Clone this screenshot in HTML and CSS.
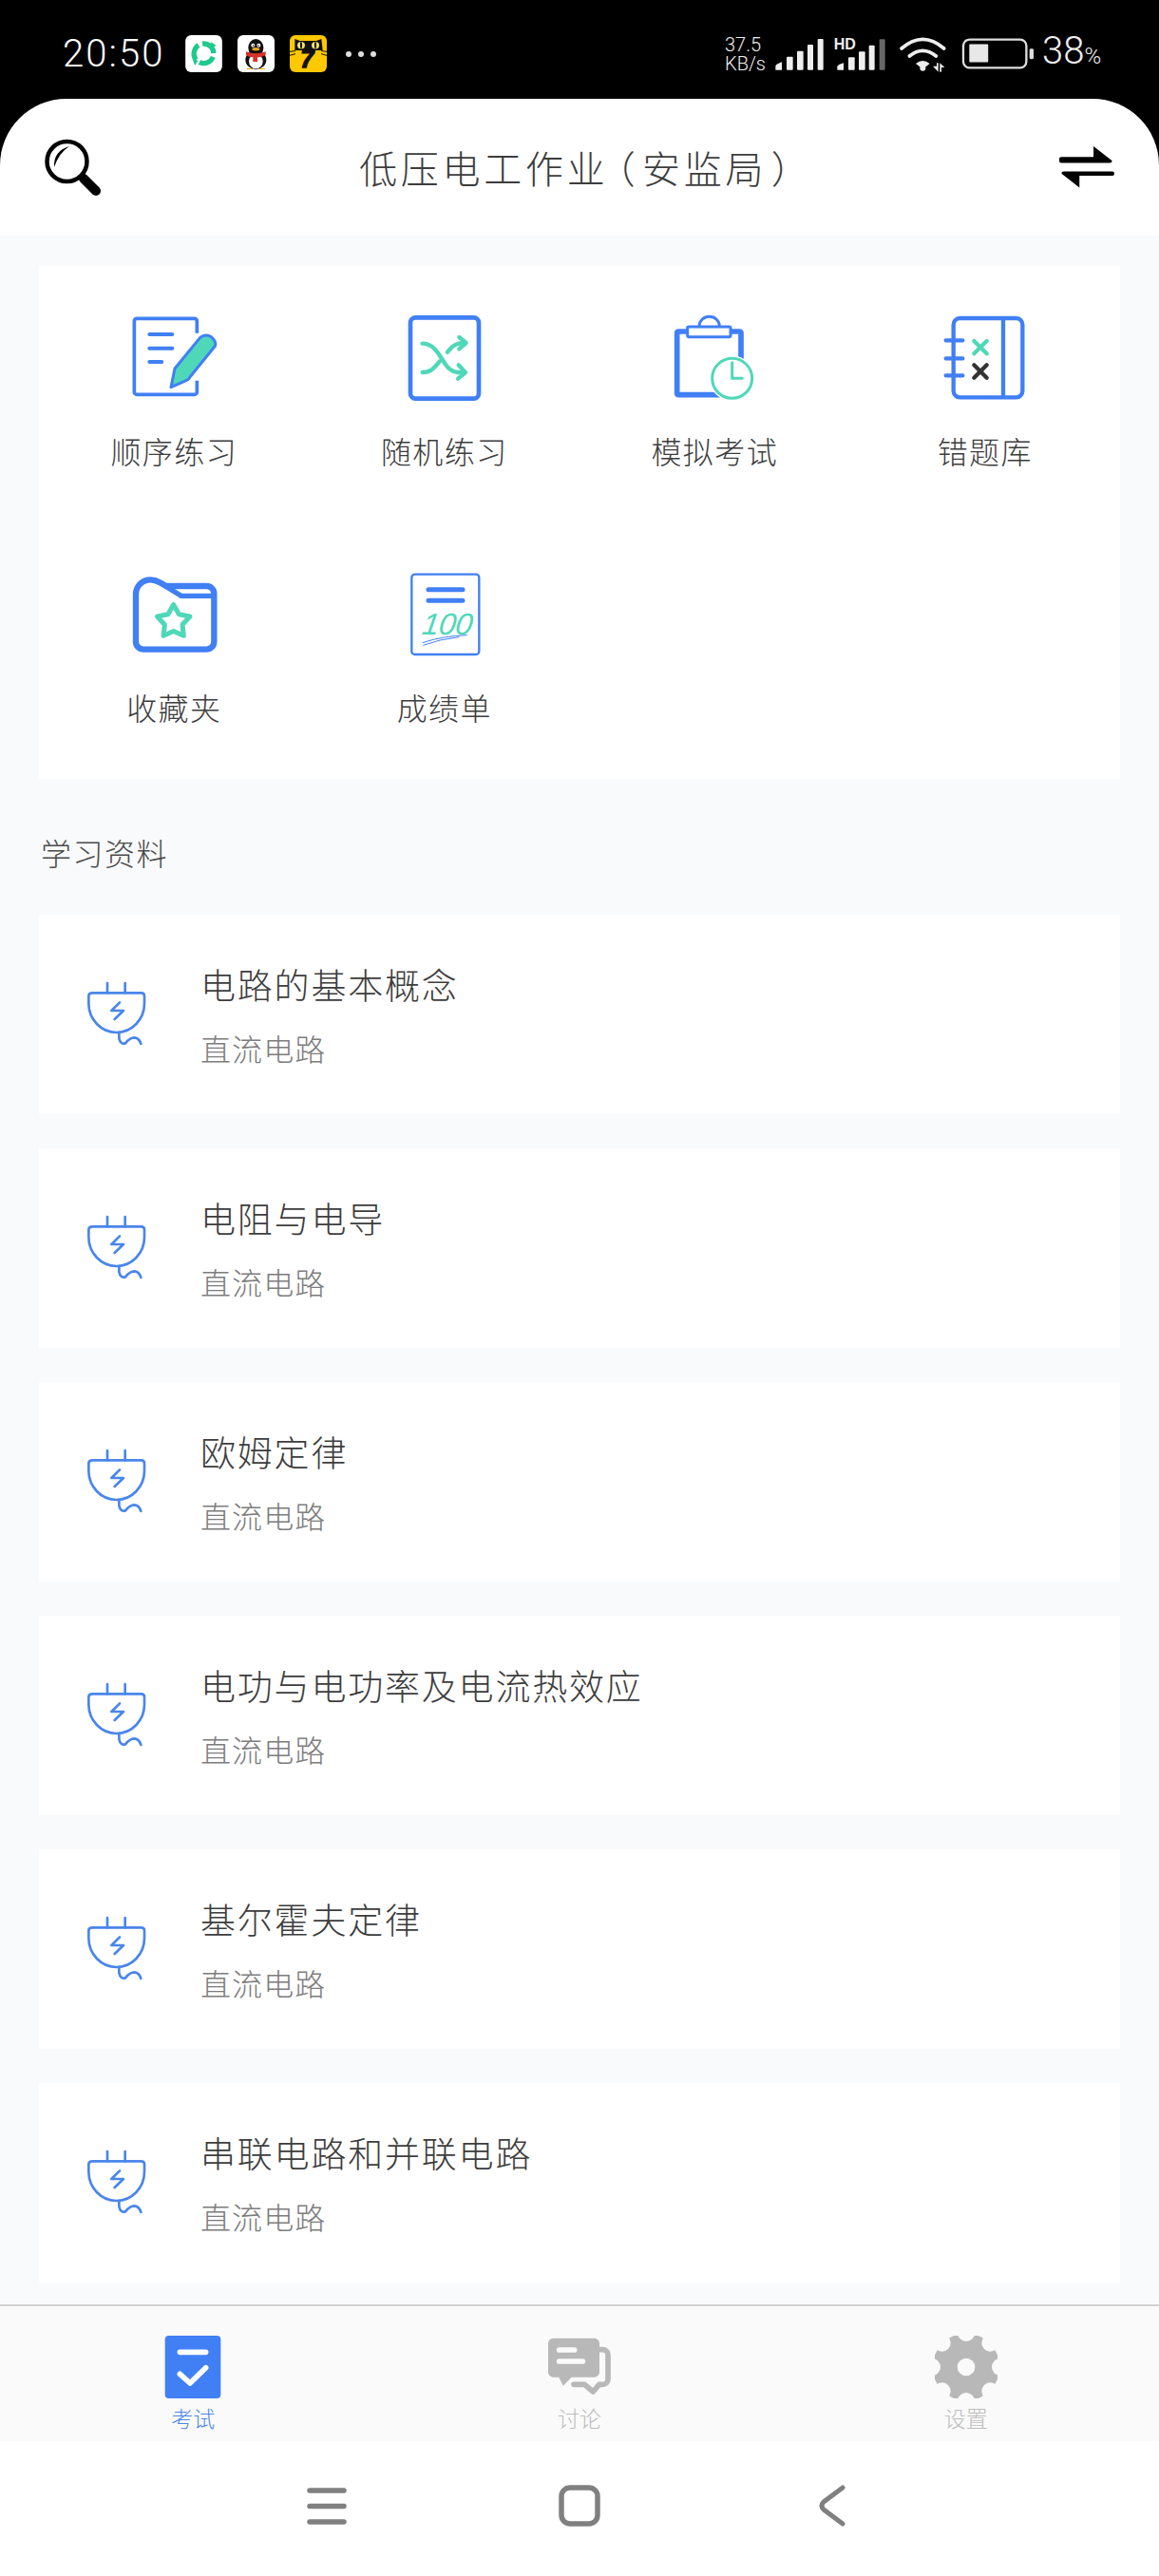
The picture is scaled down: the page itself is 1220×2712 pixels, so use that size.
FILE: index.html
```html
<!DOCTYPE html>
<html lang="zh-CN">
<head>
<meta charset="utf-8">
<title>低压电工作业（安监局）</title>
<link rel="stylesheet" href="styles.css">
</head>
<body>
<div class="phone">
  <div class="status">
    <span class="time">20:50</span>
    <div class="apps">
      <svg class="tile" viewBox="30 20 116 117"><rect x="30" y="20" width="116" height="117" rx="18" fill="#fff"/><circle cx="88" cy="78" r="31" fill="none" stroke="#1ec98c" stroke-width="16" stroke-dasharray="52 13" transform="rotate(20 88 78)"/><path d="M70 100l-18-6 8 22z M112 42l16 12-20 6z" fill="#1ec98c"/></svg>
      <svg class="tile" viewBox="195 20 117 117"><rect x="195" y="20" width="117" height="117" rx="18" fill="#fff"/><ellipse cx="253" cy="60" rx="24" ry="28" fill="#111"/><ellipse cx="253" cy="98" rx="33" ry="30" fill="#111"/><ellipse cx="253" cy="103" rx="22" ry="23" fill="#fff"/><circle cx="244" cy="52" r="6" fill="#fff"/><circle cx="262" cy="52" r="6" fill="#fff"/><circle cx="245" cy="53" r="2.5" fill="#111"/><circle cx="261" cy="53" r="2.5" fill="#111"/><ellipse cx="253" cy="64" rx="12" ry="5" fill="#f2a51e"/><path d="M222 72q31 12 62 0v11q-16 8-26 7v14h-14v-14q-12 0-22-7z" fill="#d8322b"/><path d="M224 125h22l-4 3h-18zM260 125h22v3h-18z" fill="#f2a51e"/></svg>
      <svg class="tile" viewBox="360 20 117 117"><rect x="360" y="20" width="117" height="117" rx="18" fill="#fdc800"/><path d="M376 32l16 6h52l16-6 4 36h-88z" fill="#111"/><path d="M360 72l18-2M360 84l18-5M477 72l-18-2M477 84l-18-5" stroke="#111" stroke-width="3"/><ellipse cx="396" cy="52" rx="12" ry="11" fill="#f7e26b"/><ellipse cx="441" cy="52" rx="12" ry="11" fill="#f7e26b"/><rect x="393" y="42" width="6" height="19" rx="3" fill="#111"/><rect x="438" y="42" width="6" height="19" rx="3" fill="#111"/><text class="cat-seven" x="394" y="121">7</text></svg>
    </div>
    <svg class="more" viewBox="0 0 32 6"><circle cx="3" cy="3" r="3"/><circle cx="16" cy="3" r="3"/><circle cx="29" cy="3" r="3"/></svg>
    <div class="speed"><span>37.5</span><span>KB/s</span></div>
    <svg class="signals" viewBox="180 20 555 120">
      <g fill="#eee"><path d="M187 130v-12q0-6 20-13v25z"/><rect x="222" y="88" width="20" height="42" rx="3"/><rect x="255" y="70" width="20" height="60" rx="3"/><rect x="288" y="50" width="18" height="80" rx="3"/><rect x="320" y="32" width="18" height="98" rx="3"/>
      <path d="M382 130v-10q0-6 20-12v22z"/><rect x="417" y="90" width="20" height="40" rx="3"/><rect x="450" y="72" width="20" height="58" rx="3"/><rect x="482" y="52" width="18" height="78" rx="3"/></g>
      <rect x="515" y="33" width="18" height="97" rx="3" fill="#666"/>
      <text class="hd" x="371" y="65">HD</text>
      <g fill="none" stroke="#eee" stroke-linecap="round"><path d="M585 62q67-58 134 0" stroke-width="11"/><path d="M610 86q42-34 84 0" stroke-width="11"/></g>
      <path d="M630 110q22-18 44 0l-22 17z" fill="#eee"/><circle cx="652" cy="124" r="9" fill="#eee"/>
      <path d="M684 118h12v-10h5v28zM706 108l15 14h-10v14h-5z" fill="#eee"/>
    </svg>
    <svg class="battery" viewBox="35 25 235 110"><rect x="44" y="35" width="200" height="90" rx="20" fill="none" stroke="#ddd" stroke-width="7"/><rect x="63" y="50" width="60" height="57" rx="3" fill="#e8e8e8"/><rect x="254" y="64" width="13" height="33" rx="4" fill="#ddd"/></svg>
    <span class="percent">38<small>%</small></span>
  </div>

  <header class="appbar">
    <svg class="search" viewBox="0 0 62 62"><circle cx="24.500" cy="25" r="21" fill="none" stroke="#000" stroke-width="4.500"/><path d="M11 31Q10 14 27 9Q16 16 11 31z" fill="#000"/><path d="M42 43L55 56" stroke="#000" stroke-width="10" stroke-linecap="round"/></svg>
    <h1 class="title">低压电工作业<span class="paren paren-open">（</span>安监局<span class="paren paren-close">）</span></h1>
    <svg class="swap" viewBox="350 373 172 130"><path d="M350 411q0-5 6-5h101v-33l58 45q0 7-7 7H356q-6 0-6-7zM522 458q0 7-6 7H413v37l-56-44q0-7 7-7h152q6 0 6 7z" fill="#000"/></svg>
  </header>

  <main class="content">
    <section class="grid-card">
      <a class="cell">
        <svg class="grid-icon" viewBox="69 18 360 360"><path d="M322 122V84a8 8 0 0 0-8-8H132a8 8 0 0 0-8 8V308a8 8 0 0 0 8 8H314a8 8 0 0 0 8-8V272" class="st-blue" stroke-width="11"/><path d="M172 126H244M172 170H244M172 213H211" class="st-blue" stroke-width="12" stroke-linecap="round"/><path d="M332 136Q346 124 364 132Q384 146 380 162L302 258Q298 268 288 272L240 293L252 234z" fill="#4fd8b8" stroke="#417ff5" stroke-width="9" stroke-linejoin="round"/></svg>
        <span class="cell-label">顺序练习</span>
      </a>
      <a class="cell">
        <svg class="grid-icon" viewBox="924 18 360 360"><rect x="996" y="73" width="216" height="256" rx="16" class="st-blue" stroke-width="14"/><g class="st-teal" stroke-width="13" stroke-linecap="round" stroke-linejoin="round"><path d="M1034 155C1075 155 1090 200 1110 225C1125 245 1140 247 1165 247"/><path d="M1148 223L1170 247L1146 266"/><path d="M1034 246C1065 246 1075 226 1088 212"/><path d="M1113 182C1130 158 1145 153 1168 153"/><path d="M1150 135L1172 153L1150 172"/></g></svg>
        <span class="cell-label">随机练习</span>
      </a>
      <a class="cell">
        <svg class="grid-icon" viewBox="157 18 360 360"><rect x="219" y="117" width="202" height="200" rx="4" class="st-blue" stroke-width="17"/><path d="M289 100a32 30 0 0 1 64 0" class="st-blue" stroke-width="9"/><rect x="252" y="102" width="136" height="32" rx="4" fill="#fff" stroke="#417ff5" stroke-width="9"/><circle cx="393" cy="265" r="72" fill="#fff"/><circle cx="393" cy="265" r="63" fill="#fff" stroke="#4fd8b8" stroke-width="9"/><path d="M393 215V265H425" class="st-teal" stroke-width="9" stroke-linecap="round"/></svg>
        <span class="cell-label">模拟考试</span>
      </a>
      <a class="cell">
        <svg class="grid-icon" viewBox="1011 18 360 360"><rect x="1091" y="75" width="218" height="250" rx="20" class="st-blue" stroke-width="13"/><path d="M1248 75V325" class="st-blue" stroke-width="13"/><path d="M1067 145H1120M1067 202H1120M1067 256H1120" class="st-blue" stroke-width="13" stroke-linecap="round"/><path d="M1156 147L1196 187M1196 147L1156 187" class="st-teal" stroke-width="13" stroke-linecap="round"/><path d="M1156 223L1196 263M1196 223L1156 263" fill="none" stroke="#333" stroke-width="13" stroke-linecap="round"/></svg>
        <span class="cell-label">错题库</span>
      </a>
      <a class="cell">
        <svg class="grid-icon" viewBox="69 18 360 360"><path d="M153 311H352a24 24 0 0 0 24-24V135a24 24 0 0 0-24-24H225L205 100Q190 91 175 91a46 46 0 0 0-46 46V287a24 24 0 0 0 24 24z" class="st-blue" stroke-width="19"/><path d="M222 111L272 142H376" class="st-blue" stroke-width="16"/><path d="M248 177L263.300 204L293.600 210.200L272.700 233L276.200 263.800L248 251L219.800 263.800L223.300 233L202.400 210.200L232.700 204z" class="st-teal" stroke-width="13.500" stroke-linejoin="round" transform="translate(248 224) scale(1.13) translate(-248 -225)"/></svg>
        <span class="cell-label">收藏夹</span>
      </a>
      <a class="cell">
        <svg class="grid-icon" viewBox="924 18 360 360"><rect x="1000" y="74" width="213" height="253" rx="10" class="st-blue" stroke-width="7"/><path d="M1053 122H1161M1053 157H1161" class="st-blue" stroke-width="15" stroke-linecap="round"/><text class="hundred" x="1067" y="264" transform="skewX(-8)">100</text><path d="M1034 290Q1100 268 1175 266M1036 298Q1090 278 1150 272" class="st-blue" stroke-width="3"/></svg>
        <span class="cell-label">成绩单</span>
      </a>
    </section>

    <h2 class="section-title">学习资料</h2>

    <ul class="list">
      <li class="item"><svg class="plug" viewBox="210 460 192 210"><use href="#plug-shape"/></svg><div class="item-text"><span class="item-title">电路的基本概念</span><span class="item-sub">直流电路</span></div></li>
      <li class="item"><svg class="plug" viewBox="210 460 192 210"><use href="#plug-shape"/></svg><div class="item-text"><span class="item-title">电阻与电导</span><span class="item-sub">直流电路</span></div></li>
      <li class="item"><svg class="plug" viewBox="210 460 192 210"><use href="#plug-shape"/></svg><div class="item-text"><span class="item-title">欧姆定律</span><span class="item-sub">直流电路</span></div></li>
      <li class="item"><svg class="plug" viewBox="210 460 192 210"><use href="#plug-shape"/></svg><div class="item-text"><span class="item-title">电功与电功率及电流热效应</span><span class="item-sub">直流电路</span></div></li>
      <li class="item"><svg class="plug" viewBox="210 460 192 210"><use href="#plug-shape"/></svg><div class="item-text"><span class="item-title">基尔霍夫定律</span><span class="item-sub">直流电路</span></div></li>
      <li class="item"><svg class="plug" viewBox="210 460 192 210"><use href="#plug-shape"/></svg><div class="item-text"><span class="item-title">串联电路和并联电路</span><span class="item-sub">直流电路</span></div></li>
    </ul>
  </main>

  <nav class="tabbar">
    <a class="tab tab-active">
      <svg class="tab-icon" viewBox="120 177 198 198"><rect x="131" y="177" width="176" height="198" rx="12" fill="#417ff5"/><path d="M178 229H260M178 298L210 327L260 278" fill="none" stroke="#fff" stroke-width="17" stroke-linecap="round" stroke-linejoin="round"/></svg>
      <span class="tab-label">考试</span>
    </a>
    <a class="tab">
      <svg class="tab-icon" viewBox="1341 177 198 198"><path d="M1357 185H1487a16 16 0 0 1 16 16V292a16 16 0 0 1-16 16H1415L1388 335L1375 308H1357a16 16 0 0 1-16-16V201a16 16 0 0 1 16-16z" fill="#b8b8b8"/><path d="M1376 222H1424M1376 258H1450" fill="none" stroke="#fafafa" stroke-width="17" stroke-linecap="round"/><path d="M1503 221H1513a17 17 0 0 1 17 17V314a17 17 0 0 1-17 17H1502L1483 354L1456 331H1422" fill="none" stroke="#b8b8b8" stroke-width="17" stroke-linecap="round" stroke-linejoin="round"/></svg>
      <span class="tab-label">讨论</span>
    </a>
    <a class="tab">
      <svg class="tab-icon" viewBox="999 177 198 198"><circle cx="1098" cy="276" r="106" fill="#b8b8b8"/><g fill="#fafafa"><circle cx="1098" cy="168" r="27"/><circle cx="1098" cy="384" r="27"/><circle cx="990" cy="276" r="27"/><circle cx="1206" cy="276" r="27"/><circle cx="1022" cy="200" r="27"/><circle cx="1174" cy="200" r="27"/><circle cx="1022" cy="352" r="27"/><circle cx="1174" cy="352" r="27"/><circle cx="1098" cy="276" r="28"/></g></svg>
      <span class="tab-label">设置</span>
    </a>
  </nav>

  <footer class="sysnav">
    <svg class="sys-menu" viewBox="0 0 42 39"><path d="M3 3H39M3 19.500H39M3 36H39" fill="none" stroke="#808080" stroke-width="5.500" stroke-linecap="round"/></svg>
    <svg class="sys-home" viewBox="0 0 44 44"><rect x="3" y="3" width="38" height="38" rx="9" fill="none" stroke="#808080" stroke-width="5.500"/></svg>
    <svg class="sys-back" viewBox="0 0 28 44"><path d="M25 3L5 18Q1 22 5 26L25 41" fill="none" stroke="#808080" stroke-width="5" stroke-linecap="round"/></svg>
  </footer>
</div>

<svg class="defs" width="0" height="0"><defs><g id="plug-shape" fill="none" stroke="#4a86ea" stroke-width="8" stroke-linecap="round" stroke-linejoin="round"><path d="M279 466V497M335 466V497"/><path d="M232 497H386q10 0 10 10V530a88 92 0 0 1-176 0V507q0-10 12-10z"/><path d="M316 622V640Q320 660 336 656Q350 638 365 638Q380 640 385 658"/><path d="M318 527L292 553H330L302 580"/></g></defs></svg>
</body>
</html>
```

FILE: styles.css
```css
* { box-sizing: border-box; }
html, body { margin: 0; padding: 0; background: #000; }
body { font-family: "Noto Sans CJK SC", "Noto Sans", sans-serif; font-weight: 300; }
.phone { width: 1220px; height: 2712px; display: flex; flex-direction: column; overflow: hidden; position: relative; }
.defs { position: absolute; }

.status { height: 104px; display: flex; align-items: center; padding: 9px 0 0 66px; color: #eee; font-family: Roboto, "Liberation Sans", sans-serif; font-weight: 300; }
.time { flex: none; width: 106px; font-size: 40px; line-height: 44px; letter-spacing: 2.1px; color: #fff; white-space: nowrap; }
.apps { display: flex; gap: 16px; margin-left: 23px; }
.tile { width: 39px; height: 39px; display: block; }
.cat-seven { font-family: "Liberation Sans", sans-serif; font-weight: 700; font-style: italic; font-size: 76px; fill: #111; stroke: #111; stroke-width: 4px; }
.more { width: 32px; height: 6px; margin-left: 20px; fill: #ddd; }
.speed { display: flex; flex-direction: column; margin-left: 367px; width: 51px; font-size: 20px; line-height: 20px; }
.signals { width: 185px; height: 40px; display: block; }
.hd { font-family: "Liberation Sans", sans-serif; font-weight: 700; font-size: 48px; fill: #eee; }
.battery { width: 78px; height: 37px; display: block; margin-left: 12px; }
.percent { margin-left: 8px; font-size: 40px; line-height: 44px; white-space: nowrap; }
.percent small { font-size: 24px; }

.appbar { height: 144px; flex: none; background: #fff; border-radius: 70px 70px 0 0; display: grid; grid-template-columns: 1fr auto 1fr; align-items: center; padding: 0 47px 0 46px; }
.search { width: 62px; height: 62px; display: block; }
.title { margin: 0 0 0 -4px; font-size: 40px; line-height: 56px; font-weight: 300; letter-spacing: 3.7px; color: #3d3d3d; white-space: nowrap; }
.paren { font-feature-settings: "palt"; }
.paren-open { margin-left: 7px; margin-right: 5px; }
.paren-close { margin-left: 6px; }
.swap { width: 58px; height: 44px; justify-self: end; display: block; }

.content { flex: 1; min-height: 0; background: #f8fafc; padding: 32px 41px 0; }
.grid-card { background: #fff; height: 540px; display: grid; grid-template-columns: repeat(4, 1fr); grid-auto-rows: 270px; }
.cell { display: flex; flex-direction: column; align-items: center; padding-top: 36px; }
.grid-icon { width: 120px; height: 120px; display: block; }
.st-blue { fill: none; stroke: #417ff5; }
.st-teal { fill: none; stroke: #4fd8b8; }
.hundred { font-family: "Liberation Sans", sans-serif; font-style: italic; font-size: 96px; fill: #4fd8b8; letter-spacing: -1px; }
.cell-label { margin-top: 18px; font-size: 32px; line-height: 40px; letter-spacing: 1.4px; color: #3d3d3d; }

.section-title { margin: 0; height: 143px; padding: 55px 2px 0; font-size: 32px; line-height: 44px; font-weight: 300; letter-spacing: 1.5px; color: #4a4a4a; }

.list { list-style: none; margin: 0; padding: 0; display: flex; flex-direction: column; gap: 36px; }
.item { height: 210px; background: #fff; display: flex; align-items: center; padding-left: 49px; }
.plug { width: 64px; height: 70px; display: block; }
.item-text { margin-left: 57px; display: flex; flex-direction: column; gap: 20px; }
.item-title { font-size: 37px; line-height: 50px; letter-spacing: 1.8px; color: #3d3d3d; }
.item-sub { font-size: 32px; line-height: 44px; letter-spacing: 1.1px; color: #7d7d7d; }

.tabbar { height: 144px; background: #fafafa; border-top: 2px solid #d2d2d4; display: grid; grid-template-columns: repeat(3, 1fr); position: absolute; left: 0; right: 0; top: 2426px; }
.tab { display: flex; flex-direction: column; align-items: center; padding-top: 31px; color: #bdbdbd; }
.tab-active { color: #4a86ea; }
.tab-icon { width: 66px; height: 66px; display: block; }
.tab-label { margin-top: 5px; font-size: 23px; line-height: 30px; }

.sysnav { position: absolute; left: 0; right: 0; top: 2570px; height: 142px; background: #fff; display: grid; grid-template-columns: repeat(3, 266px); justify-content: center; justify-items: center; align-items: center; padding-bottom: 6px; }
.sys-menu { width: 42px; height: 39px; }
.sys-home { width: 44px; height: 44px; }
.sys-back { width: 28px; height: 44px; }
```
